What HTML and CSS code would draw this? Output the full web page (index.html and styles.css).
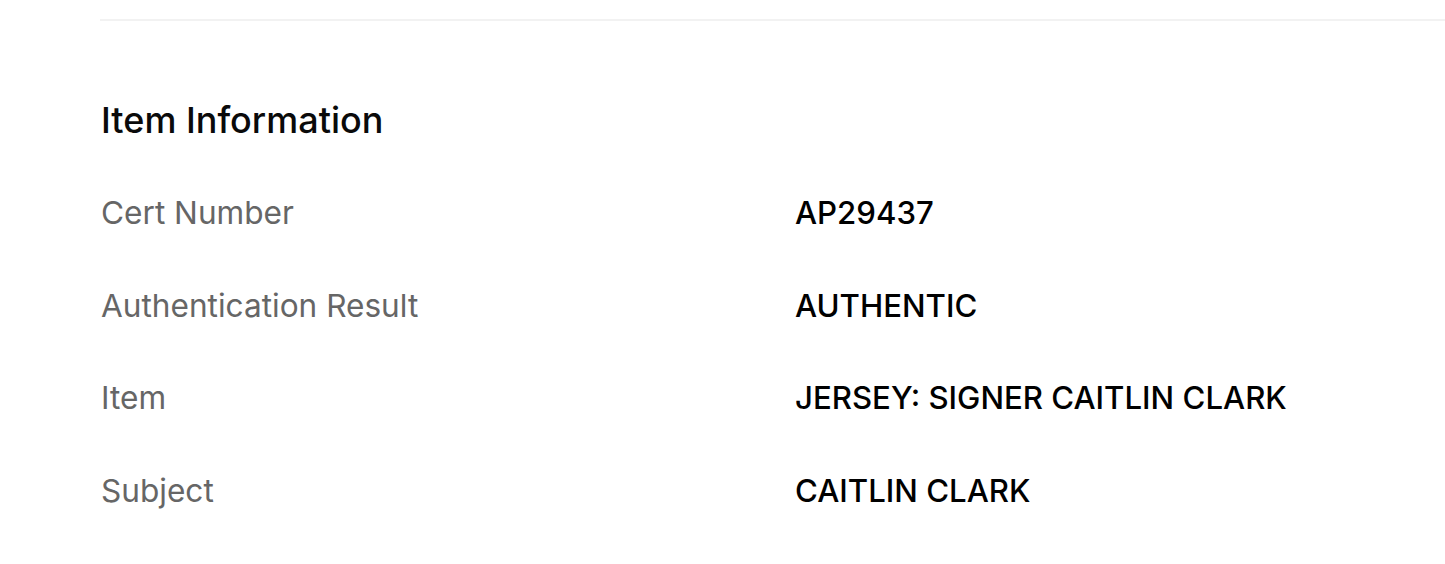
FILE: index.html
```html
<!DOCTYPE html>
<html>
<head>
<meta charset="utf-8">
<link rel="stylesheet" href="styles.css">
</head>
<body>
<div class="page">
  <div class="divider"></div>
  <section class="info">
    <h2 class="title">Item Information</h2>
    <dl class="rows">
      <div class="row"><dt>Cert Number</dt><dd>AP29437</dd></div>
      <div class="row"><dt>Authentication Result</dt><dd>AUTHENTIC</dd></div>
      <div class="row"><dt>Item</dt><dd>JERSEY: SIGNER CAITLIN CLARK</dd></div>
      <div class="row"><dt>Subject</dt><dd>CAITLIN CLARK</dd></div>
    </dl>
  </section>
</div>
</body>
</html>
```
FILE: styles.css
```css
html, body {
  margin: 0;
  padding: 0;
  background: #fff;
}
body {
  font-family: "Inter", "Liberation Sans", sans-serif;
  color: #000;
}
.page {
  padding-top: 19px;
  padding-left: 100px;
}
.divider {
  height: 2px;
  background: #f2f2f2;
}
.info {
  padding-left: 1px;
}
.title {
  margin: 0;
  padding-top: 79px;
  font-size: 36px;
  line-height: 40px;
  font-weight: 500;
  color: #0a0a0a;
}
.rows {
  margin: 0;
  padding-top: 53px;
}
.row {
  display: grid;
  grid-template-columns: 694px 1fr;
  height: 92.5px;
  align-items: start;
}
.row dt {
  font-size: 31.6px;
  line-height: 40px;
  color: #666;
}
.row dd {
  margin: 0;
  font-size: 31.2px;
  line-height: 40px;
  font-weight: 500;
  color: #000;
}
```
